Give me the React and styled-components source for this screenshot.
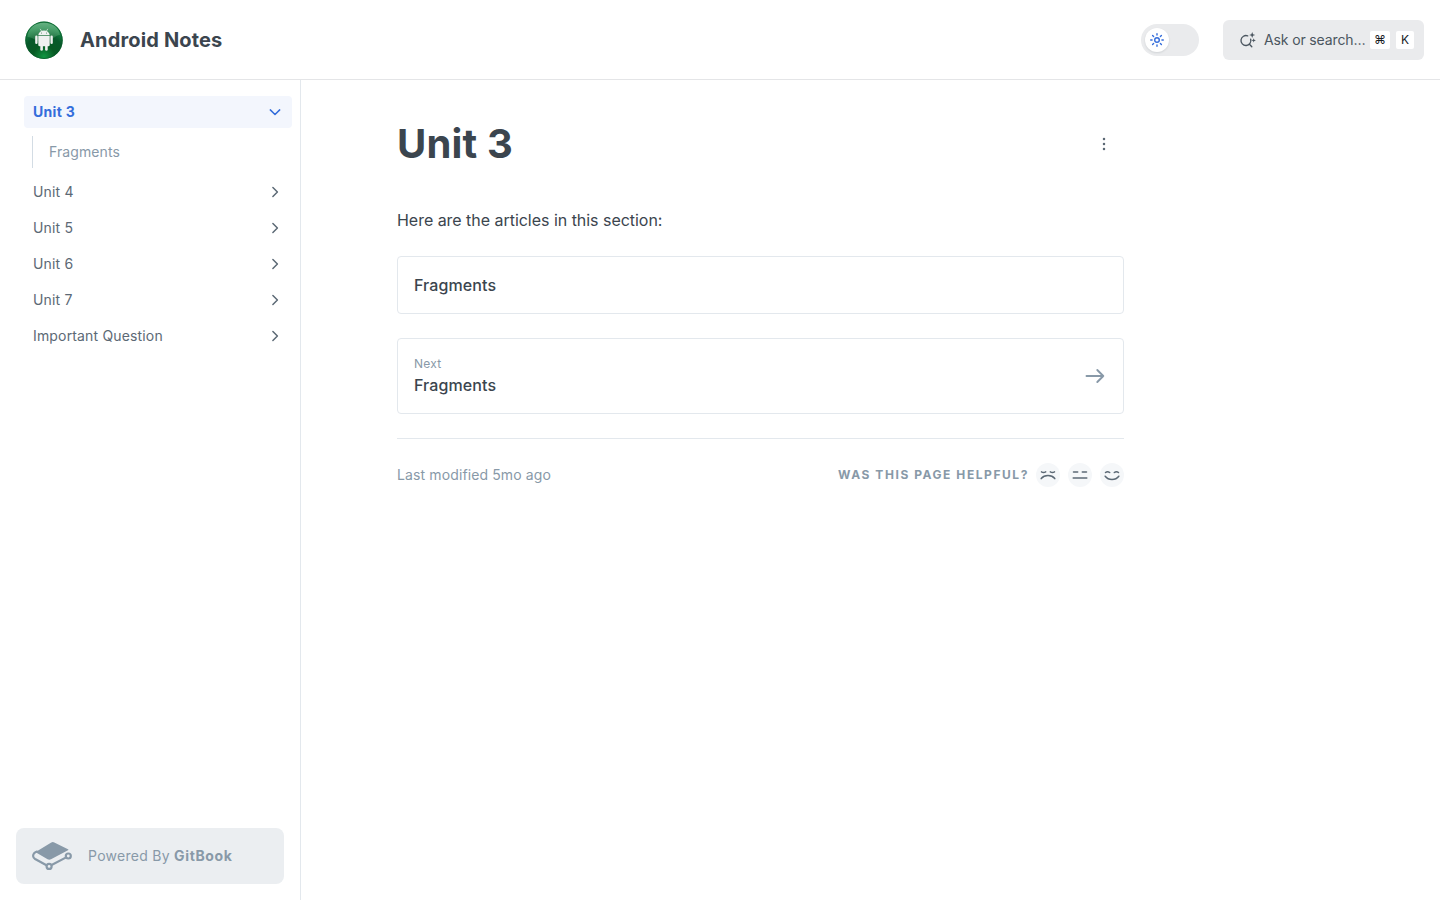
import React from "react";
import styled, { createGlobalStyle, css } from "styled-components";

const GlobalStyle = createGlobalStyle`
  *, *::before, *::after { box-sizing: border-box; }
  body { margin: 0; background: #fff; color: #3b454e; font-family: Inter, "Liberation Sans", sans-serif; font-size: 16px; }
  h1, p { margin: 0; }
  button { font: inherit; border: 0; padding: 0; margin: 0; cursor: pointer; }
  a { color: inherit; text-decoration: none; }
  svg { display: block; flex: none; }
`;

const Page = styled.div`
  display: flex;
  flex-direction: column;
  height: 100vh;
`;

const Header = styled.header`
  display: flex;
  align-items: center;
  height: 80px;
  flex: none;
  padding: 0 16px 0 24px;
  border-bottom: 1px solid #e4e5e7;
`;

const Brand = styled.a`
  display: flex;
  align-items: center;
  gap: 16px;
  margin-right: auto;
  font-size: 20px;
  line-height: 24px;
  font-weight: 700;
  letter-spacing: 0.15px;
`;

const Toggle = styled.button`
  display: flex;
  align-items: center;
  width: 58px;
  height: 32px;
  padding: 4px;
  margin-right: 24px;
  border-radius: 16px;
  background: #eaebed;
`;

const Knob = styled.span`
  display: grid;
  place-items: center;
  width: 24px;
  height: 24px;
  border-radius: 50%;
  background: #fff;
  box-shadow: 0 1px 2px rgba(59, 69, 78, 0.14);
`;

const Search = styled.button`
  display: flex;
  align-items: center;
  width: 201px;
  height: 40px;
  padding: 0 10px 0 16px;
  border-radius: 6px;
  background: #eaebed;
  color: #4b5660;
  font-size: 14px;
`;

const SearchLabel = styled.span`
  margin: 0 auto 0 8px;
  line-height: 20px;
  letter-spacing: -0.13px;
  white-space: nowrap;
`;

const Key = styled.kbd`
  display: grid;
  place-items: center;
  width: ${(p) => p.$width}px;
  height: 18px;
  border-radius: 2px;
  background: #fff;
  color: #181c1f;
  font-family: inherit;
  font-size: 12px;
  & + & { margin-left: 6px; }
`;

const Body = styled.div`
  display: flex;
  flex: 1;
  min-height: 0;
`;

const Sidebar = styled.aside`
  display: flex;
  flex-direction: column;
  justify-content: space-between;
  width: 301px;
  flex: none;
  padding: 16px;
  border-right: 1px solid #e3e8ed;
`;

const Nav = styled.nav`
  display: flex;
  flex-direction: column;
  gap: 4px;
  margin: 0 -8px 0 8px;
`;

const NavItem = styled.a`
  display: flex;
  align-items: center;
  justify-content: space-between;
  height: 32px;
  padding: 0 9px;
  border-radius: 4px;
  font-size: 14px;
  line-height: 20px;
  letter-spacing: 0.16px;
  color: #5c6975;
  ${(p) =>
    p.$active &&
    css`
      background: #f3f6fd;
      color: #346ddb;
      font-weight: 700;
      letter-spacing: 0.3px;
    `}
`;

const SubNav = styled.div`
  margin: 4px 8px;
  border-left: 1px solid #d3dce4;
`;

const SubItem = styled.a`
  display: flex;
  align-items: center;
  height: 32px;
  padding-left: 16px;
  font-size: 14px;
  line-height: 20px;
  letter-spacing: 0.1px;
  color: #8899a8;
`;

const Powered = styled.a`
  display: flex;
  align-items: center;
  gap: 16px;
  height: 56px;
  padding: 0 16px;
  border-radius: 8px;
  background: #ebeef1;
  color: #8899a8;
  font-size: 14px;
  line-height: 20px;
  letter-spacing: 0.27px;
  b { letter-spacing: 0.65px; }
`;

const Main = styled.main`
  width: 727px;
  margin-left: 96px;
  padding-top: 40px;
`;

const TitleRow = styled.div`
  display: flex;
  align-items: center;
  justify-content: space-between;
  height: 48px;
  padding-right: 12px;
`;

const Title = styled.h1`
  font-size: 40px;
  line-height: 48px;
  font-weight: 700;
  letter-spacing: 0.15px;
`;

const Intro = styled.p`
  margin: 39px 0 23px;
  line-height: 26px;
  letter-spacing: -0.03px;
`;

const CardLink = styled.a`
  display: flex;
  align-items: center;
  justify-content: space-between;
  height: ${(p) => (p.$tall ? 76 : 58)}px;
  padding: 0 16px;
  margin-bottom: 24px;
  border: 1px solid #e3e8ed;
  border-radius: 4px;
  font-weight: 500;
  line-height: 24px;
  letter-spacing: 0.1px;
`;

const Caption = styled.div`
  font-size: 12px;
  line-height: 18px;
  font-weight: 400;
  letter-spacing: 0.2px;
  color: #8899a8;
`;

const Footer = styled.footer`
  display: flex;
  align-items: center;
  justify-content: space-between;
  padding-top: 24px;
  border-top: 1px solid #e3e8ed;
  color: #8899a8;
  font-size: 14px;
  line-height: 20px;
  letter-spacing: 0.12px;
`;

const Feedback = styled.div`
  display: flex;
  align-items: center;
  gap: 8px;
`;

const Question = styled.span`
  font-size: 12px;
  line-height: 18px;
  padding-bottom: 1px;
  font-weight: 700;
  letter-spacing: 1.56px;
  margin-right: -1px;
  text-transform: uppercase;
`;

const Face = styled.button`
  display: grid;
  place-items: center;
  width: 24px;
  height: 24px;
  border-radius: 50%;
  background: #f5f7f9;
  color: #5c6975;
`;

const AndroidLogo = () => (
  <svg width="40" height="40" viewBox="0 0 40 40">
    <defs>
      <radialGradient id="ball" cx="50%" cy="94%" r="78%">
        <stop offset="0" stopColor="#119642" />
        <stop offset=".38" stopColor="#075a24" />
        <stop offset=".72" stopColor="#07592a" />
        <stop offset="1" stopColor="#158444" />
      </radialGradient>
      <linearGradient id="shine" x1="0" y1="0" x2="0" y2="1">
        <stop offset="0" stopColor="#8fc9a2" stopOpacity=".65" />
        <stop offset="1" stopColor="#4e9a68" stopOpacity=".3" />
      </linearGradient>
    </defs>
    <circle cx="20" cy="20.300" r="18.700" fill="url(#ball)" />
    <circle cx="20" cy="20.300" r="18.200" fill="none" stroke="#0b5a2b" strokeOpacity=".7" />
    <path d="M3.500 17C4 8 11 2.800 20 2.800S35 8 36 15c-5 0-9 7-17 7-7 0-10-5-15.500-5Z" fill="url(#shine)" />
    <g fill="#eff1f0">
      <path d="M14.300 15c.3-2.800 2.700-4.600 5.700-4.600s5.400 1.800 5.700 4.600Z" />
      <path d="M14.300 15.700h11.400v9.200a1.400 1.400 0 0 1-1.400 1.400h-8.600a1.400 1.400 0 0 1-1.400-1.400Z" />
      <rect x="11.200" y="15.600" width="2.400" height="8.300" rx="1.200" />
      <rect x="26.400" y="15.600" width="2.400" height="8.300" rx="1.200" />
      <rect x="16.300" y="24" width="2.600" height="6.800" rx="1.300" />
      <rect x="21.100" y="24" width="2.600" height="6.800" rx="1.300" />
    </g>
    <path d="m16.400 9.200 1.200 2M23.600 9.200l-1.200 2" stroke="#eff1f0" strokeWidth=".7" strokeLinecap="round" />
    <circle cx="17.500" cy="13" r=".5" fill="#397d50" />
    <circle cx="22.500" cy="13" r=".5" fill="#397d50" />
  </svg>
);

const SunIcon = () => (
  <svg width="16" height="16" viewBox="0 0 16 16" fill="none" stroke="#346ddb" strokeWidth="1.400" strokeLinecap="round">
    <circle cx="8" cy="8" r="2.300" />
    <path d="M8 1.700v1.400M8 12.900v1.400M1.700 8h1.400M12.900 8h1.400M3.600 3.600l1 1M11.400 11.400l1 1M3.600 12.400l1-1M11.400 4.600l1-1" />
  </svg>
);

const AskIcon = () => (
  <svg width="17" height="16" viewBox="0 0 17 16" fill="none" stroke="#4b5660" strokeWidth="1.350" strokeLinecap="round">
    <path d="M8.700 3.900A4.950 4.950 0 1 0 11.700 7.200M10.500 12.200l2.300 2.500" />
    <path d="M13.200 0l.85 2.150 2.150.85-2.150.85-.85 2.150-.85-2.150-2.150-.85 2.150-.85ZM14.700 6.200l.6 1.600 1.600.6-1.600.6-.6 1.600-.6-1.600-1.600-.6 1.600-.6Z" fill="#4b5660" stroke="none" />
  </svg>
);

const Chevron = ({ down }) => (
  <svg width="16" height="16" viewBox="0 0 16 16" fill="none" stroke="currentColor" strokeWidth="1.500" strokeLinecap="round" strokeLinejoin="round">
    <path d={down ? "M3.300 5.900 8 10.500l4.700-4.600" : "M5.900 3.500 10.400 8l-4.500 4.500"} />
  </svg>
);

const GitBookLogo = () => (
  <svg width="40" height="32" viewBox="0 0 40 32" fill="none" stroke="#8899a8" strokeWidth="2.200" strokeLinejoin="round">
    <path d="M19.300 2.500q1.500-.8 3 0L36 9.200q1 .5 0 1.100L19 19.300q-1.700.8-3.400 0L4.500 12.800q-1-.6 0-1.300Z" fill="#8899a8" stroke="none" />
    <path d="M5.600 11.200C2.400 12.300 1.100 13.800 1.100 16c.1 1.500.8 2.300 2 3l11.400 6.200M19.600 25l14.100-7.400" />
    <circle cx="17.100" cy="26.400" r="2.500" />
    <circle cx="36.300" cy="16" r="2.500" />
  </svg>
);

const MoreIcon = () => (
  <svg width="16" height="16" viewBox="0 0 16 16" fill="#5c6975">
    <circle cx="8" cy="3" r="1.250" />
    <circle cx="8" cy="8" r="1.250" />
    <circle cx="8" cy="13" r="1.250" />
  </svg>
);

const ArrowIcon = () => (
  <svg width="24" height="24" viewBox="0 0 24 24" fill="none" stroke="#8899a8" strokeWidth="1.900" strokeLinecap="round" strokeLinejoin="round">
    <path d="M3.500 12h16.800M14.300 6l6 6-6 6" />
  </svg>
);

const FACES = {
  sad: "M2.500 5.800q2 1.300 4.200 0M11.300 5.800q2.200 1.300 4.200 0M2.200 12.600c3.300-4 10.300-4 13.600 0",
  neutral: "M2.500 6h4.200M11.300 6h4.200M2.200 12h13.600",
  happy: "M2.500 6.500q2-1.700 4.200 0M11.300 6.500q2.200-1.700 4.200 0M2.200 10.200c3.300 4.300 10.300 4.300 13.600 0",
};

const FaceIcon = ({ mood }) => (
  <svg width="18" height="18" viewBox="0 0 18 18" fill="none" stroke="currentColor" strokeWidth="1.500" strokeLinecap="round">
    <path d={FACES[mood]} />
  </svg>
);

const SECTIONS = ["Unit 4", "Unit 5", "Unit 6", "Unit 7", "Important Question"];

export default function App() {
  return (
    <Page>
      <GlobalStyle />
      <Header>
        <Brand href="#">
          <AndroidLogo />
          Android Notes
        </Brand>
        <Toggle aria-label="Toggle theme">
          <Knob>
            <SunIcon />
          </Knob>
        </Toggle>
        <Search>
          <AskIcon />
          <SearchLabel>Ask or search…</SearchLabel>
          <Key $width={20}>⌘</Key>
          <Key $width={18}>K</Key>
        </Search>
      </Header>
      <Body>
        <Sidebar>
          <Nav>
            <NavItem href="#" $active>
              Unit 3
              <Chevron down />
            </NavItem>
            <SubNav>
              <SubItem href="#">Fragments</SubItem>
            </SubNav>
            {SECTIONS.map((name) => (
              <NavItem href="#" key={name}>
                {name}
                <Chevron />
              </NavItem>
            ))}
          </Nav>
          <Powered href="#">
            <GitBookLogo />
            <span>
              Powered By <b>GitBook</b>
            </span>
          </Powered>
        </Sidebar>
        <Main>
          <TitleRow>
            <Title>Unit 3</Title>
            <MoreIcon />
          </TitleRow>
          <Intro>Here are the articles in this section:</Intro>
          <CardLink href="#">Fragments</CardLink>
          <CardLink href="#" $tall>
            <div>
              <Caption>Next</Caption>
              Fragments
            </div>
            <ArrowIcon />
          </CardLink>
          <Footer>
            <span>Last modified 5mo ago</span>
            <Feedback>
              <Question>Was this page helpful?</Question>
              {Object.keys(FACES).map((mood) => (
                <Face key={mood} aria-label={mood}>
                  <FaceIcon mood={mood} />
                </Face>
              ))}
            </Feedback>
          </Footer>
        </Main>
      </Body>
    </Page>
  );
}
